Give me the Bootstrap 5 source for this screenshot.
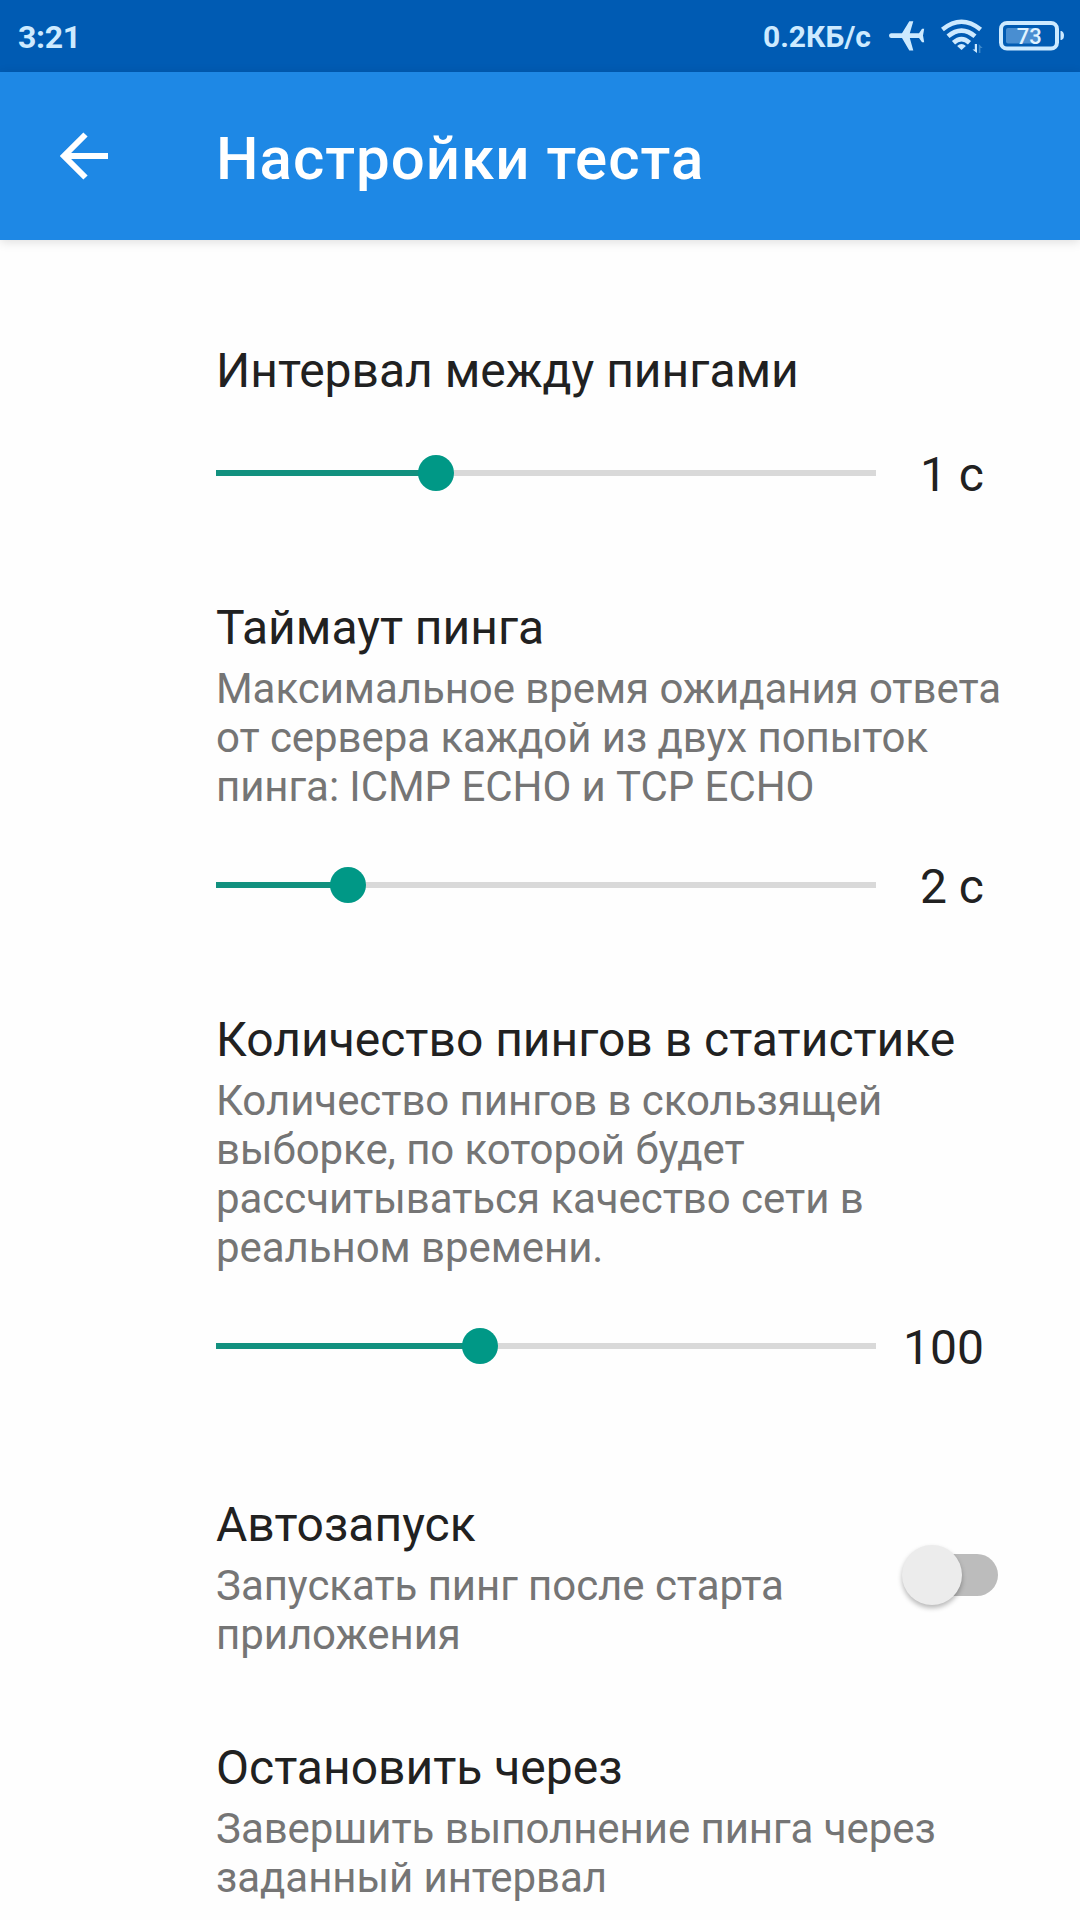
<!DOCTYPE html>
<html lang="ru">
<head>
<meta charset="utf-8">
<meta name="viewport" content="width=device-width, initial-scale=1">
<title>Настройки теста</title>
<link href="https://cdn.jsdelivr.net/npm/bootstrap@5.3.0/dist/css/bootstrap.min.css" rel="stylesheet">
<style>
  body { font-family: Roboto, "Noto Sans", sans-serif; background: #fefefe; color: #212121; height: 1920px; overflow: hidden; }
  .status-bar { height: 72px; background: #005bb3; color: #cdeaff; padding: 0 15px 0 18px; font-weight: 700; }
  .status-clock { font-size: 32px; line-height: 38px; padding-top: 1px; letter-spacing: -.3px; }
  .status-speed { font-size: 30px; line-height: 34px; margin-right: 18px; padding-top: 1px; }
  .app-bar { height: 168px; background: #1e88e5; color: #fff; padding-left: 56px; box-shadow: 0 2px 10px rgba(0,0,0,.13); }
  .back-button { width: 160px; line-height: 0; }
  .app-title { font-size: 60px; line-height: 70px; font-weight: 500; padding-top: 5px; letter-spacing: 1px; }
  .settings { padding: 103px 64px 0 216px; }
  .pref-title { font-size: 48px; line-height: 56px; font-weight: 400; white-space: nowrap; }
  .pref-summary { font-size: 42px; line-height: 49px; color: #757575; margin-top: 8px; white-space: nowrap; letter-spacing: -.06px; }
  .slider-row { height: 56px; margin-top: 46px; padding-right: 32px; }
  .slider { width: 660px; }
  .slider .progress { height: 6px; border-radius: 0; background: #d9d9d9; }
  .slider .progress-bar { background: #12917f; }
  .slider-thumb { width: 36px; height: 36px; background: #009886; }
  .slider-value { font-size: 48px; line-height: 56px; padding-top: 4px; }
  .gap-slider { margin-bottom: 99px; }
  .gap-section { margin-bottom: 123px; }
  .gap-plain { margin-bottom: 81px; }
  .toggle { width: 96px; height: 60px; margin: 0 18px 6px 0; }
  .toggle-track { width: 84px; height: 42px; background: #bcbcbc; }
  .toggle-thumb { width: 60px; height: 60px; background: #ececec; box-shadow: 0 3px 5px rgba(0,0,0,.28); }
</style>
</head>
<body>
<header>
  <div class="status-bar d-flex align-items-center justify-content-between">
    <span class="status-clock">3:21</span>
    <div class="d-flex align-items-center">
      <span class="status-speed">0.2КБ/с</span>
      <svg width="36" height="32" viewBox="0 0 36 32" fill="#cdeaff" aria-hidden="true">
        <path d="M2 13.2 H13 L20.3 1.2 H24.3 L20.8 13.2 H30 L33 8.8 H35.2 L34 15.5 L35.2 22.2 H33 L30 18 H20.8 L24.3 30.6 H20.3 L13 18 H2 Q0 17.8 0 15.6 Q0 13.4 2 13.2 Z"/>
      </svg>
      <svg width="42" height="34" viewBox="0 0 42 34" class="ms-3" fill="none" stroke="#cdeaff" stroke-width="4.6" aria-hidden="true">
        <path d="M1.4 10.5 Q20.5 -5 39.6 10.5"/>
        <path d="M7 17.3 Q20.5 5.8 34 17.3"/>
        <path d="M12.5 23.8 Q20.5 16.4 28.5 23.8"/>
        <path d="M20.5 31 L16.1 27 Q20.5 22.8 24.9 27 Z" fill="#cdeaff" stroke="none"/>
        <path d="M36 25 V34 L31.5 30.5 H33.8 V25 Z" fill="#cdeaff" stroke="none"/>
        <path d="M37.8 34 V25 L41.6 29 H39.4 V34 Z" fill="#3d88c8" stroke="none"/>
      </svg>
      <svg width="66" height="30" viewBox="0 0 66 30" class="ms-3" aria-hidden="true">
        <rect x="2" y="2" width="56" height="25.6" rx="6" fill="none" stroke="#cdeaff" stroke-width="4"/>
        <rect x="7" y="7" width="33" height="15.5" rx="2" fill="#498ed1"/>
        <path d="M61.5 10 H62.5 Q65 11 65 14.5 Q65 18 62.5 19 H61.5 Z" fill="#cdeaff"/>
        <text x="30.3" y="22.6" text-anchor="middle" font-family="Roboto, sans-serif" font-size="22" font-weight="500" fill="#e0f3ff">73</text>
      </svg>
    </div>
  </div>
  <div class="app-bar d-flex align-items-center">
    <div class="back-button">
      <svg width="56" height="56" viewBox="0 0 56 56" fill="none" stroke="#fff" stroke-width="6" aria-label="Назад">
        <path d="M52 28 H9 M29.5 6.5 L8 28 L29.5 49.5"/>
      </svg>
    </div>
    <h1 class="app-title mb-0">Настройки теста</h1>
  </div>
</header>

<main class="settings">
  <section class="gap-slider">
    <h2 class="pref-title mb-0">Интервал между пингами</h2>
    <div class="slider-row d-flex align-items-center justify-content-between">
      <div class="slider position-relative">
        <div class="progress"><div class="progress-bar" style="width:33.333%"></div></div>
        <span class="slider-thumb rounded-circle position-absolute top-50 translate-middle" style="left:33.333%"></span>
      </div>
      <span class="slider-value">1 с</span>
    </div>
  </section>

  <section class="gap-slider">
    <h2 class="pref-title mb-0">Таймаут пинга</h2>
    <p class="pref-summary mb-0">Максимальное время ожидания ответа<br>от сервера каждой из двух попыток<br>пинга: ICMP ECHO и TCP ECHO</p>
    <div class="slider-row d-flex align-items-center justify-content-between">
      <div class="slider position-relative">
        <div class="progress"><div class="progress-bar" style="width:20%"></div></div>
        <span class="slider-thumb rounded-circle position-absolute top-50 translate-middle" style="left:20%"></span>
      </div>
      <span class="slider-value">2 с</span>
    </div>
  </section>

  <section class="gap-section">
    <h2 class="pref-title mb-0">Количество пингов в статистике</h2>
    <p class="pref-summary mb-0">Количество пингов в скользящей<br>выборке, по которой будет<br>рассчитываться качество сети в<br>реальном времени.</p>
    <div class="slider-row d-flex align-items-center justify-content-between">
      <div class="slider position-relative">
        <div class="progress"><div class="progress-bar" style="width:40%"></div></div>
        <span class="slider-thumb rounded-circle position-absolute top-50 translate-middle" style="left:40%"></span>
      </div>
      <span class="slider-value">100</span>
    </div>
  </section>

  <section class="gap-plain d-flex align-items-center justify-content-between">
    <div>
      <h2 class="pref-title mb-0">Автозапуск</h2>
      <p class="pref-summary mb-0">Запускать пинг после старта<br>приложения</p>
    </div>
    <div class="toggle position-relative d-flex align-items-center justify-content-end">
      <div class="toggle-track rounded-pill"></div>
      <span class="toggle-thumb rounded-circle position-absolute top-0 start-0"></span>
    </div>
  </section>

  <section>
    <h2 class="pref-title mb-0">Остановить через</h2>
    <p class="pref-summary mb-0">Завершить выполнение пинга через<br>заданный интервал</p>
  </section>
</main>
<script src="https://cdn.jsdelivr.net/npm/bootstrap@5.3.0/dist/js/bootstrap.bundle.min.js"></script>
</body>
</html>
